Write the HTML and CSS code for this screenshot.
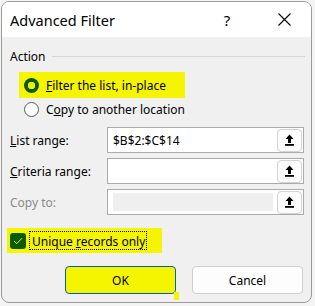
FILE: index.html
```html
<!DOCTYPE html>
<html lang="en">
<head>
    <meta charset="UTF-8">
    <title>Advanced Filter</title>
    <link rel="stylesheet" href="styles.css">
</head>
<body>
    <div class="dialog">
        <div class="titlebar">
            <span class="title">Advanced Filter</span>
            <span class="help">?</span>
            <span class="close">
                <svg width="13" height="13" viewBox="0 0 13 13"><path d="M0.5 0.5 L12.5 12.5 M12.5 0.5 L0.5 12.5" stroke="#000" stroke-width="1.1" fill="none"/></svg>
            </span>
        </div>

        <div class="content">
            <div class="group-head">
                <span>Action</span>
                <span class="rule"></span>
            </div>

            <div class="radio marked">
                <span class="dot on"></span>
                <span><u>F</u>ilter the list, in-place</span>
            </div>
            <div class="radio">
                <span class="dot"></span>
                <span>C<u>o</u>py to another location</span>
            </div>

            <div class="field">
                <span class="lbl"><u>L</u>ist range:</span>
                <div class="box">
                    <span class="val">$B$2:$C$14</span>
                    <button class="pick"><svg width="9" height="12" viewBox="0 0 9 12"><path d="M4.5 0.5 L8.5 5 H6 V9 H3 V5 H0.5 Z" fill="#000"/><rect x="0" y="10" width="9" height="1.8" fill="#000"/></svg></button>
                </div>
            </div>
            <div class="field">
                <span class="lbl"><u>C</u>riteria range:</span>
                <div class="box">
                    <span class="val"></span>
                    <button class="pick"><svg width="9" height="12" viewBox="0 0 9 12"><path d="M4.5 0.5 L8.5 5 H6 V9 H3 V5 H0.5 Z" fill="#000"/><rect x="0" y="10" width="9" height="1.8" fill="#000"/></svg></button>
                </div>
            </div>
            <div class="field disabled">
                <span class="lbl">Copy to:</span>
                <div class="box">
                    <span class="val"><span class="grey"></span></span>
                    <button class="pick"><svg width="9" height="12" viewBox="0 0 9 12"><path d="M4.5 0.5 L8.5 5 H6 V9 H3 V5 H0.5 Z" fill="#000"/><rect x="0" y="10" width="9" height="1.8" fill="#000"/></svg></button>
                </div>
            </div>

            <div class="check">
                <span class="tick"><svg width="10" height="8" viewBox="0 0 10 8"><path d="M1 4 L3.8 6.6 L9 1.2" stroke="#f0f000" stroke-width="1" fill="none"/></svg></span>
                <span class="focus">Unique <u>r</u>ecords only</span>
            </div>

            <div class="actions">
                <button class="btn ok">OK<span class="smear"></span></button>
                <button class="btn cancel">Cancel</button>
            </div>
        </div>
    </div>
</body>
</html>
```

FILE: styles.css
```css
body {
    margin: 0;
    background-color: #f4f4f4;
    font-family: 'Noto Sans', sans-serif;
    font-size: 12px;
    color: #000;
}

.dialog {
    margin: 1px 0 0 1px;
    width: 311px;
    height: 302px;
    box-sizing: border-box;
    border: 1px solid #9b9b9b;
    border-radius: 8px;
    overflow: hidden;
    background-color: #f0f0f0;
}

.titlebar {
    height: 35px;
    background-color: #fff;
    display: flex;
    align-items: center;
    padding-left: 8px;
}

.title {
    flex: 1;
    font-size: 14.5px;
}

.help {
    width: 14px;
    text-align: center;
    font-size: 15px;
    margin-right: 44px;
}

.close {
    display: flex;
    margin-right: 20px;
}

.content {
    padding: 0 8px;
}

.group-head {
    display: flex;
    align-items: center;
    margin-top: 11px;
    height: 16px;
    margin-right: -2px;
}

.rule {
    flex: 1;
    height: 1px;
    background-color: #d6d6d6;
    margin-left: 6px;
}

.radio {
    display: flex;
    align-items: center;
    height: 22px;
    margin-left: 14px;
    gap: 7px;
}

.radio.marked {
    margin-top: 8px;
    margin-left: 9px;
    width: 166px;
    height: 26px;
    padding-left: 5px;
    box-sizing: border-box;
    background-color: #f5f500;
}

.dot {
    width: 13px;
    height: 13px;
    border: 1px solid #5a5a5a;
    border-radius: 50%;
    background-color: #fff;
}

.dot.on {
    width: 15px;
    height: 15px;
    border: none;
    background: radial-gradient(circle, #f0f000 0 3.5px, #0a5a00 4px);
}

.field {
    display: flex;
    align-items: center;
    margin-top: 5px;
}

.radio + .field {
    margin-top: 7px;
}

.lbl {
    width: 97px;
}

.box {
    flex: 1;
    height: 26px;
    margin-right: -1px;
    box-sizing: border-box;
    border: 1px solid #ababab;
    background-color: #fff;
    display: flex;
    align-items: center;
    padding: 0 1px 0 5px;
}

.val {
    flex: 1;
}

.disabled .lbl {
    color: #8a8a8a;
}

.disabled .val {
    display: flex;
    height: 18px;
}

.grey {
    width: 160px;
    background-color: #efefef;
}

.pick {
    width: 25px;
    height: 23px;
    border: 1px solid #d3d3d3;
    border-radius: 4px;
    background-color: #fcfcfc;
    padding: 0;
    display: flex;
    align-items: center;
    justify-content: center;
}

.check {
    display: flex;
    align-items: center;
    margin: 13px 0 0 -3px;
    width: 155px;
    height: 25px;
    padding-left: 3px;
    box-sizing: border-box;
    background-color: #f5f500;
}

.tick {
    width: 16px;
    height: 16px;
    border-radius: 3px;
    background-color: #0a5a00;
    display: flex;
    align-items: center;
    justify-content: center;
}

.focus {
    margin-left: 3px;
    padding: 0 1px 0 2px;
    height: 19px;
    line-height: 19px;
    box-sizing: border-box;
    border: 1px dotted #000;
}

.actions {
    display: flex;
    justify-content: flex-end;
    gap: 16px;
    margin-top: 13px;
}

.btn {
    width: 111px;
    height: 28px;
    border-radius: 4px;
    font-family: 'Noto Sans', sans-serif;
    font-size: 12px;
    color: #000;
}

.ok {
    position: relative;
    background-color: #f5f500;
    border: 1px solid #0063b1;
}

.smear {
    position: absolute;
    left: 108px;
    top: 25px;
    width: 5px;
    height: 8px;
    background-color: #f5f500;
}

.cancel {
    background-color: #fdfdfd;
    border: 1px solid #d0d0d0;
}
```
